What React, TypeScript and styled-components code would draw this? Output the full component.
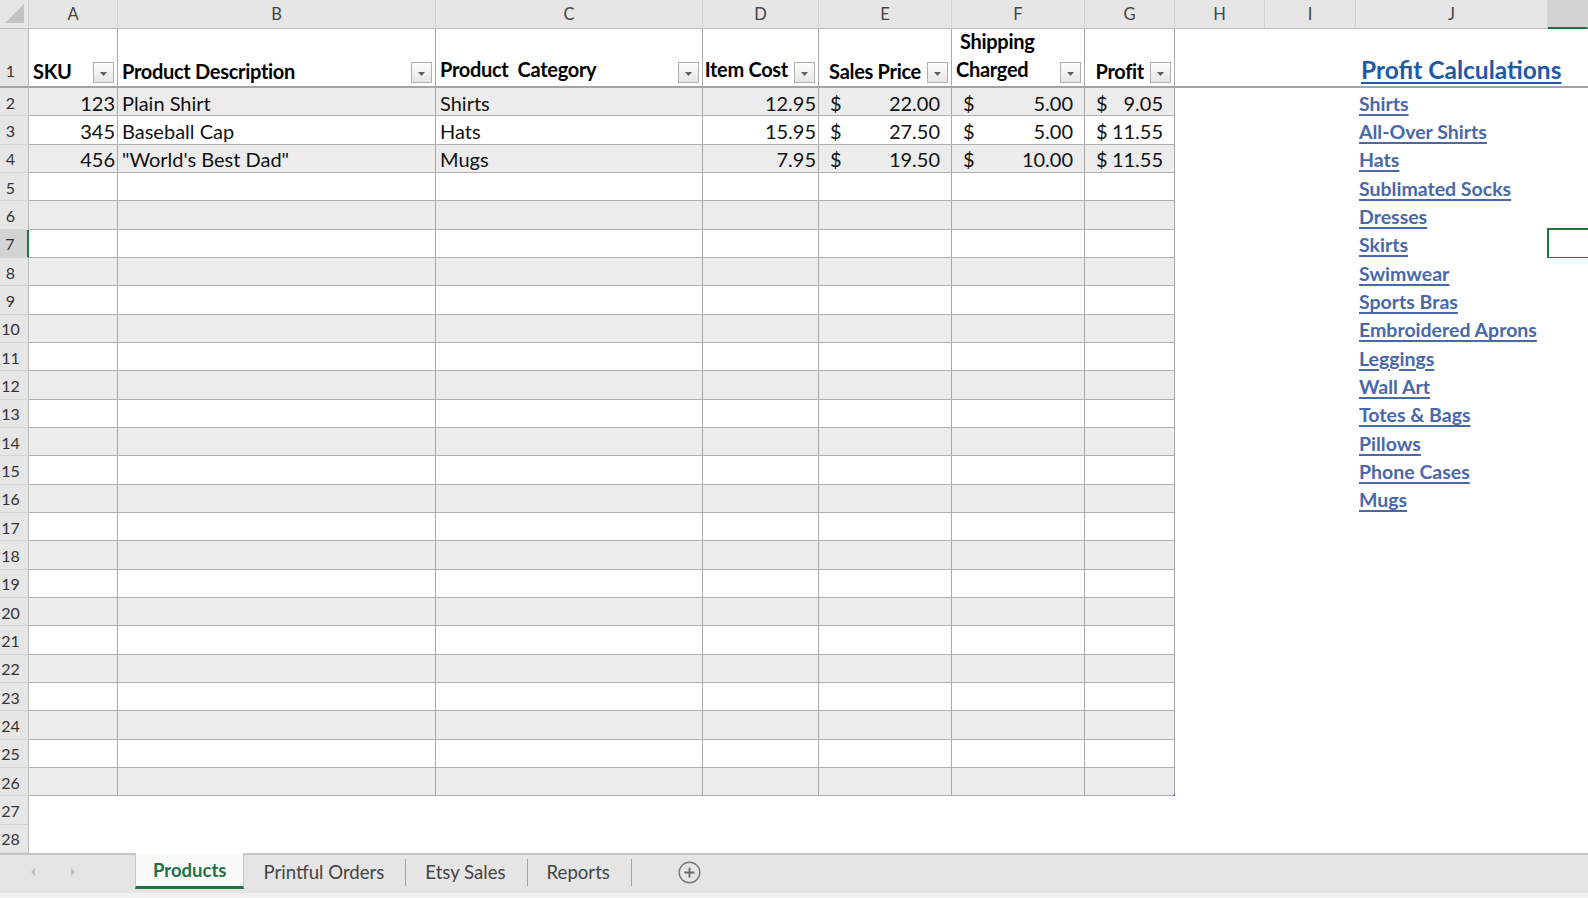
import React from 'react';
import styled, { createGlobalStyle } from 'styled-components';

const GlobalStyle = createGlobalStyle`
  html, body {
    margin: 0;
    padding: 0;
    background: #fff;
    overflow: hidden;
  }
  body {
    font-family: Lato, "Liberation Sans", sans-serif;
  }
  * {
    box-sizing: border-box;
  }
`;

const GRID = '29px 89px 318px 267px 116px 133px 133px 90px 90px 91px 192px 1fr';
const ROW_H = 765 / 27;
const GREEN = '#217346';
const GRIDLINE = '#a9a9a9';

const LETTERS = ['A', 'B', 'C', 'D', 'E', 'F', 'G', 'H', 'I', 'J', ''];

const PRODUCTS = [
  { sku: 123, name: 'Plain Shirt', category: 'Shirts', cost: '12.95', price: '22.00', shipping: '5.00', profit: '9.05' },
  { sku: 345, name: 'Baseball Cap', category: 'Hats', cost: '15.95', price: '27.50', shipping: '5.00', profit: '11.55' },
  { sku: 456, name: '"World\'s Best Dad"', category: 'Mugs', cost: '7.95', price: '19.50', shipping: '10.00', profit: '11.55' },
];

const LINKS = [
  'Shirts', 'All-Over Shirts', 'Hats', 'Sublimated Socks', 'Dresses', 'Skirts', 'Swimwear', 'Sports Bras',
  'Embroidered Aprons', 'Leggings', 'Wall Art', 'Totes & Bags', 'Pillows', 'Phone Cases', 'Mugs',
];

const SHEETS = ['Products', 'Printful Orders', 'Etsy Sales', 'Reports'];

const TABLE_LAST_ROW = 26;
const LAST_ROW = 28;
const SELECTED_ROW = 7;

const Workbook = styled.div`
  width: 100%;
  height: 898px;
  display: flex;
  flex-direction: column;
  background: #fff;
  overflow: hidden;
`;

const Sheet = styled.div`
  flex: 1;
  display: flex;
  flex-direction: column;
  overflow: hidden;
`;

const ColumnBar = styled.div`
  display: grid;
  grid-template-columns: ${GRID};
  grid-template-rows: 100%;
  height: 29px;
  flex-shrink: 0;
  background: #e6e6e6;
  border-bottom: 1px solid #bcbcbc;
`;

const Corner = styled.div`
  display: flex;
  align-items: flex-end;
  justify-content: flex-end;
  padding: 0 4px 5px 0;
  border-right: 1px solid #cfcfcf;
`;

const ColLetter = styled.div<{ $active?: boolean }>`
  display: flex;
  align-items: center;
  justify-content: center;
  font-size: 16.5px;
  color: #444;
  border-right: 1px solid #d2d2d2;
  background: ${p => (p.$active ? '#d3d3d3' : 'transparent')};
  border-bottom: ${p => (p.$active ? `2px solid ${GREEN}` : '0')};
  margin-bottom: ${p => (p.$active ? '-1px' : '0')};
`;

const Row = styled.div<{ $h: number }>`
  display: grid;
  grid-template-columns: ${GRID};
  grid-template-rows: 100%;
  height: ${p => p.$h}px;
  flex-shrink: 0;
`;

const RowNum = styled.div<{ $active?: boolean; $freeze?: boolean }>`
  display: flex;
  align-items: ${p => (p.$freeze ? 'flex-end' : 'center')};
  justify-content: center;
  padding: ${p => (p.$freeze ? '0 7px 5px 0' : '2px 7px 0 0')};
  font-size: 16px;
  line-height: 20px;
  color: #333;
  background: ${p => (p.$active ? '#d3d3d3' : '#e6e6e6')};
  border-right: ${p => (p.$active ? `2px solid ${GREEN}` : '1px solid #bcbcbc')};
  border-bottom: ${p => (p.$freeze ? '2px solid #a3a3a3' : '1px solid #d4d4d4')};
`;

const Cell = styled.div<{ $table?: boolean; $stripe?: boolean; $align?: 'left' | 'right'; $selected?: boolean }>`
  position: relative;
  display: flex;
  align-items: center;
  justify-content: ${p => (p.$align === 'right' ? 'flex-end' : 'flex-start')};
  padding: ${p => (p.$align === 'right' ? '2px 2px 0 4px' : '2px 4px 0')};
  font-size: 20px;
  color: #111;
  white-space: nowrap;
  background: ${p => (p.$stripe ? '#ececec' : '#fff')};
  border-right: ${p => (p.$table ? `1px solid ${GRIDLINE}` : '0')};
  border-bottom: ${p => (p.$table ? '1px solid #b0b0b0' : '0')};

  &::after {
    content: '';
    display: ${p => (p.$selected ? 'block' : 'none')};
    position: absolute;
    left: -1px;
    top: -2px;
    right: -4px;
    bottom: -1px;
    border: 2.5px solid ${GREEN};
  }
`;

const MoneyCell = styled(Cell)`
  justify-content: space-between;
  padding: 2px 11px 0;
`;

const LinkCell = styled(Cell)`
  padding-left: 3px;
`;

const HeadCell = styled.div<{ $table?: boolean; $align: 'left' | 'right' }>`
  display: flex;
  align-items: flex-end;
  justify-content: ${p => (p.$align === 'right' ? 'flex-end' : 'space-between')};
  gap: 6px;
  padding: 0 3px 3px 4px;
  font-size: 20px;
  font-weight: 700;
  color: #000;
  background: #fff;
  white-space: nowrap;
  border-right: ${p => (p.$table ? `1px solid ${GRIDLINE}` : '0')};
  border-bottom: 2px solid #a3a3a3;
`;

const HeadLabel = styled.span<{ $lift?: boolean; $lines?: boolean }>`
  line-height: ${p => (p.$lines ? '28px' : '24px')};
  letter-spacing: -0.3px;
  margin-bottom: ${p => (p.$lift ? '2px' : '0')};
`;

const Indent = styled.span`
  padding-left: 4px;
`;

const FilterButton = styled.span`
  flex-shrink: 0;
  width: 21px;
  height: 21px;
  display: flex;
  align-items: center;
  justify-content: center;
  padding-top: 2px;
  border: 1px solid #b0b0b0;
  background: linear-gradient(#fdfdfd, #e6e6e6);
`;

const TitleCell = styled.div`
  display: flex;
  align-items: flex-end;
  padding: 0 0 2px 5px;
  background: #fff;
  border-bottom: 2px solid #a3a3a3;
  white-space: nowrap;
  overflow: visible;
`;

const Title = styled.a`
  position: relative;
  z-index: 1;
  font-size: 24.5px;
  font-weight: 700;
  line-height: 28px;
  color: #1e5aa8;
  text-decoration: underline;
  text-decoration-thickness: 2px;
  text-underline-offset: 3px;
`;

const SheetLink = styled.a`
  font-size: 19.5px;
  font-weight: 700;
  color: #4868aa;
  text-decoration: underline;
  text-decoration-thickness: 1.5px;
  text-underline-offset: 3px;
`;

const ResizeGrip = styled.span`
  position: absolute;
  right: -3px;
  bottom: -3px;
  width: 0;
  height: 0;
  border-left: 6px solid transparent;
  border-bottom: 6px solid #2d4f8c;
`;

const TabBar = styled.div`
  height: 45px;
  flex-shrink: 0;
  display: flex;
  align-items: stretch;
  background: #e5e5e5;
  border-top: 2px solid #c4c4c4;
  border-bottom: 5px solid #f1f1f1;
`;

const NavArrows = styled.div`
  width: 135px;
  display: flex;
  align-items: center;
  gap: 34px;
  padding: 0 0 4px 30px;
`;

const Tab = styled.div`
  display: flex;
  align-items: center;
  padding: 0 21px 4px 19px;
  font-size: 18.6px;
  color: #444;
  white-space: nowrap;
`;

const ActiveTab = styled.div`
  align-self: flex-start;
  height: 36px;
  margin-top: -2px;
  display: flex;
  align-items: center;
  padding: 1px 17px 0;
  font-size: 18.5px;
  font-weight: 700;
  color: ${GREEN};
  background: #fafafa;
  border-left: 1px solid #c9c9c9;
  border-right: 1px solid #c9c9c9;
  border-bottom: 3px solid ${GREEN};
`;

const TabDivider = styled.span`
  align-self: center;
  width: 1px;
  height: 27px;
  margin-bottom: 4px;
  background: #a3a3a3;
`;

const AddSheet = styled.div`
  display: flex;
  align-items: center;
  padding: 0 0 4px 46px;
`;

type HeadDef = { label: React.ReactNode; align: 'left' | 'right'; lift?: boolean; lines?: boolean };

const HEADS: HeadDef[] = [
  { label: 'SKU', align: 'left' },
  { label: 'Product Description', align: 'left' },
  { label: 'Product\u00a0 Category', align: 'left', lift: true },
  { label: 'Item Cost', align: 'right', lift: true },
  { label: 'Sales Price', align: 'right' },
  { label: <><Indent>Shipping</Indent><br />Charged</>, align: 'left', lines: true },
  { label: 'Profit', align: 'right' },
];

const FilterIcon = () => (
  <svg width="9" height="6" viewBox="0 0 9 6">
    <path d="M1 1h7L4.5 5z" fill="#5f5f5f" />
  </svg>
);

const Arrow = ({ dir }: { dir: 'left' | 'right' }) => (
  <svg width="6" height="10" viewBox="0 0 6 10">
    <path d={dir === 'left' ? 'M5 1L1 5l4 4z' : 'M1 1l4 4-4 4z'} fill="#bdbdbd" />
  </svg>
);

const HeaderRow = () => (
  <Row $h={59}>
    <RowNum $freeze>1</RowNum>
    {HEADS.map((h, i) => (
      <HeadCell key={i} $table $align={h.align}>
        <HeadLabel $lift={h.lift} $lines={h.lines}>{h.label}</HeadLabel>
        <FilterButton><FilterIcon /></FilterButton>
      </HeadCell>
    ))}
    <TitleCell />
    <TitleCell />
    <TitleCell>
      <Title href="#">Profit Calculations</Title>
    </TitleCell>
    <TitleCell />
  </Row>
);

const DataRow = ({ r }: { r: number }) => {
  const inTable = r <= TABLE_LAST_ROW;
  const stripe = inTable && r % 2 === 0;
  const p = PRODUCTS[r - 2];
  const link = LINKS[r - 2];

  const money = (v?: string) =>
    v ? (
      <MoneyCell $table $stripe={stripe}>
        <span>$</span>
        <span>{v}</span>
      </MoneyCell>
    ) : (
      <Cell $table={inTable} $stripe={stripe} />
    );

  return (
    <Row $h={ROW_H}>
      <RowNum $active={r === SELECTED_ROW}>{r}</RowNum>
      <Cell $table={inTable} $stripe={stripe} $align="right">{p?.sku}</Cell>
      <Cell $table={inTable} $stripe={stripe}>{p?.name}</Cell>
      <Cell $table={inTable} $stripe={stripe}>{p?.category}</Cell>
      <Cell $table={inTable} $stripe={stripe} $align="right">{p?.cost}</Cell>
      {money(p?.price)}
      {money(p?.shipping)}
      {p ? (
        money(p.profit)
      ) : (
        <Cell $table={inTable} $stripe={stripe}>
          {r === TABLE_LAST_ROW && <ResizeGrip />}
        </Cell>
      )}
      <Cell />
      <Cell />
      <LinkCell>{link && <SheetLink href="#">{link}</SheetLink>}</LinkCell>
      <Cell $selected={r === SELECTED_ROW} />
    </Row>
  );
};

export default function App() {
  const rows: number[] = [];
  for (let r = 2; r <= LAST_ROW; r++) rows.push(r);

  return (
    <Workbook>
      <GlobalStyle />
      <Sheet>
        <ColumnBar>
          <Corner>
            <svg width="19" height="19" viewBox="0 0 19 19">
              <path d="M19 0v19H0z" fill="#c2c2c2" />
            </svg>
          </Corner>
          {LETTERS.map((l, i) => (
            <ColLetter key={i} $active={i === LETTERS.length - 1}>{l}</ColLetter>
          ))}
        </ColumnBar>
        <HeaderRow />
        {rows.map(r => (
          <DataRow key={r} r={r} />
        ))}
      </Sheet>
      <TabBar>
        <NavArrows>
          <Arrow dir="left" />
          <Arrow dir="right" />
        </NavArrows>
        <ActiveTab>{SHEETS[0]}</ActiveTab>
        {SHEETS.slice(1).map(s => (
          <React.Fragment key={s}>
            <Tab>{s}</Tab>
            <TabDivider />
          </React.Fragment>
        ))}
        <AddSheet>
          <svg width="23" height="23" viewBox="0 0 23 23">
            <circle cx="11.5" cy="11.5" r="10.3" fill="none" stroke="#7a7a7a" strokeWidth="1.4" />
            <path d="M11.5 6.5v10M6.5 11.5h10" stroke="#6a6a6a" strokeWidth="1.8" />
          </svg>
        </AddSheet>
      </TabBar>
    </Workbook>
  );
}
